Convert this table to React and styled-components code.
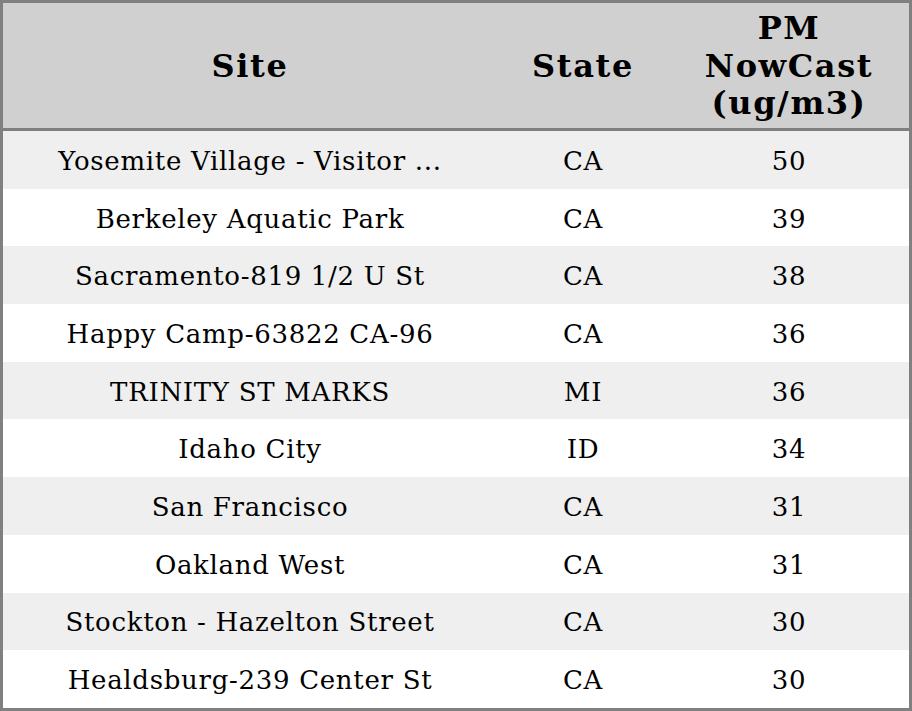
import React from 'react';
import styled, { createGlobalStyle } from 'styled-components';

const GlobalStyle = createGlobalStyle`
  html, body {
    margin: 0;
    padding: 0;
    background: #fff;
  }
  body {
    font-family: "DejaVu Serif", serif;
  }
`;

const sites = [
  { name: 'Yosemite Village - Visitor ...', state: 'CA', pm: 50 },
  { name: 'Berkeley Aquatic Park', state: 'CA', pm: 39 },
  { name: 'Sacramento-819 1/2 U St', state: 'CA', pm: 38 },
  { name: 'Happy Camp-63822 CA-96', state: 'CA', pm: 36 },
  { name: 'TRINITY ST MARKS', state: 'MI', pm: 36 },
  { name: 'Idaho City', state: 'ID', pm: 34 },
  { name: 'San Francisco', state: 'CA', pm: 31 },
  { name: 'Oakland West', state: 'CA', pm: 31 },
  { name: 'Stockton - Hazelton Street', state: 'CA', pm: 30 },
  { name: 'Healdsburg-239 Center St', state: 'CA', pm: 30 },
];

const Table = styled.table`
  width: 912px;
  border-collapse: separate;
  border-spacing: 0;
  border: 3px solid #808080;
  table-layout: fixed;
  font-family: "DejaVu Serif", serif;
  color: #000;
`;

const HeadCell = styled.th`
  box-sizing: border-box;
  height: 128px;
  padding: 2px 8px 0;
  background: #d0d0d0;
  border-bottom: 3px solid #808080;
  font-size: 32px;
  font-weight: bold;
  line-height: 37.5px;
  letter-spacing: 1.6px;
  text-align: center;
  vertical-align: middle;
`;

const Row = styled.tr`
  height: 57.7px;
  background: ${p => (p.odd ? '#efefef' : '#fff')};
`;

const Cell = styled.td`
  padding: 2px 8px 0;
  font-size: 26px;
  letter-spacing: 0.7px;
  text-align: center;
  vertical-align: middle;
  white-space: nowrap;
  overflow: hidden;
`;

export default function App() {
  return (
    <>
      <GlobalStyle />
      <Table>
        <colgroup>
          <col style={{ width: 494 }} />
          <col style={{ width: 172 }} />
          <col style={{ width: 240 }} />
        </colgroup>
        <thead>
          <tr>
            <HeadCell>Site</HeadCell>
            <HeadCell>State</HeadCell>
            <HeadCell>
              PM
              <br />
              NowCast
              <br />
              (ug/m3)
            </HeadCell>
          </tr>
        </thead>
        <tbody>
          {sites.map((s, i) => (
            <Row key={i} odd={i % 2 === 0}>
              <Cell>{s.name}</Cell>
              <Cell>{s.state}</Cell>
              <Cell>{s.pm}</Cell>
            </Row>
          ))}
        </tbody>
      </Table>
    </>
  );
}
